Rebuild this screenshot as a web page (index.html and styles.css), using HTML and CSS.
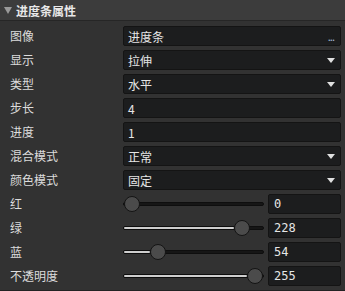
FILE: index.html
```html
<!DOCTYPE html>
<html lang="zh">
<head>
  <meta charset="UTF-8" />
  <title>进度条属性</title>
  <link rel="stylesheet" href="styles.css">
</head>
<body>
  <div class="panel">
    <div class="header">
      <span class="caret"></span>
      <span class="title">进度条属性</span>
    </div>
    <div class="rows">
      <div class="row">
        <span class="label">图像</span>
        <div class="box">进度条<span class="dots">...</span></div>
      </div>
      <div class="row">
        <span class="label">显示</span>
        <div class="box">拉伸<span class="arrow"></span></div>
      </div>
      <div class="row">
        <span class="label">类型</span>
        <div class="box">水平<span class="arrow"></span></div>
      </div>
      <div class="row">
        <span class="label">步长</span>
        <div class="box">4</div>
      </div>
      <div class="row">
        <span class="label">进度</span>
        <div class="box">1</div>
      </div>
      <div class="row">
        <span class="label">混合模式</span>
        <div class="box">正常<span class="arrow"></span></div>
      </div>
      <div class="row">
        <span class="label">颜色模式</span>
        <div class="box">固定<span class="arrow"></span></div>
      </div>
      <div class="row">
        <span class="label">红</span>
        <div class="slider-cell">
          <div class="track"><div class="rail"><div class="fill" style="width:0%"></div><div class="thumb" style="left:0%"></div></div></div>
          <div class="box num">0</div>
        </div>
      </div>
      <div class="row">
        <span class="label">绿</span>
        <div class="slider-cell">
          <div class="track"><div class="rail"><div class="fill" style="width:89.4%"></div><div class="thumb" style="left:89.4%"></div></div></div>
          <div class="box num">228</div>
        </div>
      </div>
      <div class="row">
        <span class="label">蓝</span>
        <div class="slider-cell">
          <div class="track"><div class="rail"><div class="fill" style="width:21.2%"></div><div class="thumb" style="left:21.2%"></div></div></div>
          <div class="box num">54</div>
        </div>
      </div>
      <div class="row">
        <span class="label">不透明度</span>
        <div class="slider-cell">
          <div class="track"><div class="rail"><div class="fill" style="width:100%"></div><div class="thumb" style="left:100%"></div></div></div>
          <div class="box num">255</div>
        </div>
      </div>
    </div>
  </div>
</body>
</html>
```

FILE: styles.css
```css
body {
  margin: 0;
  background: #323232;
  color: #dcdcdc;
  font-family: "Noto Sans CJK SC", "Noto Sans", sans-serif;
  font-size: 12px;
}
.panel {
  width: 345px;
  height: 291px;
  background: #323232;
  border-bottom: 1px solid #222;
  box-sizing: border-box;
}
.header {
  height: 20px;
  background: #3c3c3c;
  border-bottom: 1px solid #262626;
  display: flex;
  align-items: center;
}
.caret {
  width: 0;
  height: 0;
  margin: 0 4px 0 4px;
  border-left: 4px solid transparent;
  border-right: 4px solid transparent;
  border-top: 7px solid #9a9a9a;
}
.title {
  font-weight: bold;
  color: #e8e8e8;
}
.rows {
  padding: 5px 4px 0 10px;
  display: flex;
  flex-direction: column;
  gap: 4px;
}
.row {
  display: grid;
  grid-template-columns: 113px 1fr;
  height: 20px;
  align-items: center;
}
.label {
  line-height: 20px;
}
.box {
  height: 20px;
  box-sizing: border-box;
  background: #1c1d1e;
  border: 1px solid #141414;
  border-radius: 2px;
  padding: 0 5px 0 4px;
  line-height: 17px;
  color: #e6e6e6;
  display: flex;
  align-items: center;
}
.dots {
  margin-left: auto;
  font-size: 11px;
  letter-spacing: -1px;
  color: #9fb7cf;
  margin-right: 1px;
}
.arrow {
  margin-left: auto;
  width: 0;
  height: 0;
  border-left: 4px solid transparent;
  border-right: 4px solid transparent;
  border-top: 5px solid #e0e0e0;
}
.slider-cell {
  display: grid;
  grid-template-columns: 141px 73px;
  gap: 4px;
  align-items: center;
}
.track {
  position: relative;
  height: 4px;
  background: #161616;
  border: 1px solid #0e0e0e;
  box-sizing: border-box;
  border-radius: 2px;
}
/* thumb travels over the track width minus its own size */
.rail {
  position: absolute;
  left: 0;
  right: 16px;
  top: 0;
  bottom: 0;
}
.fill {
  height: 100%;
  background: #cfcfcf;
  border-radius: 2px;
}
.thumb {
  position: absolute;
  top: 50%;
  width: 16px;
  height: 16px;
  box-sizing: border-box;
  border-radius: 50%;
  background: #4b4b4b;
  border: 1px solid #141414;
  transform: translateY(-50%);
}
.num {
  font-family: "DejaVu Sans Mono", monospace;
  padding-left: 5px;
}
```
